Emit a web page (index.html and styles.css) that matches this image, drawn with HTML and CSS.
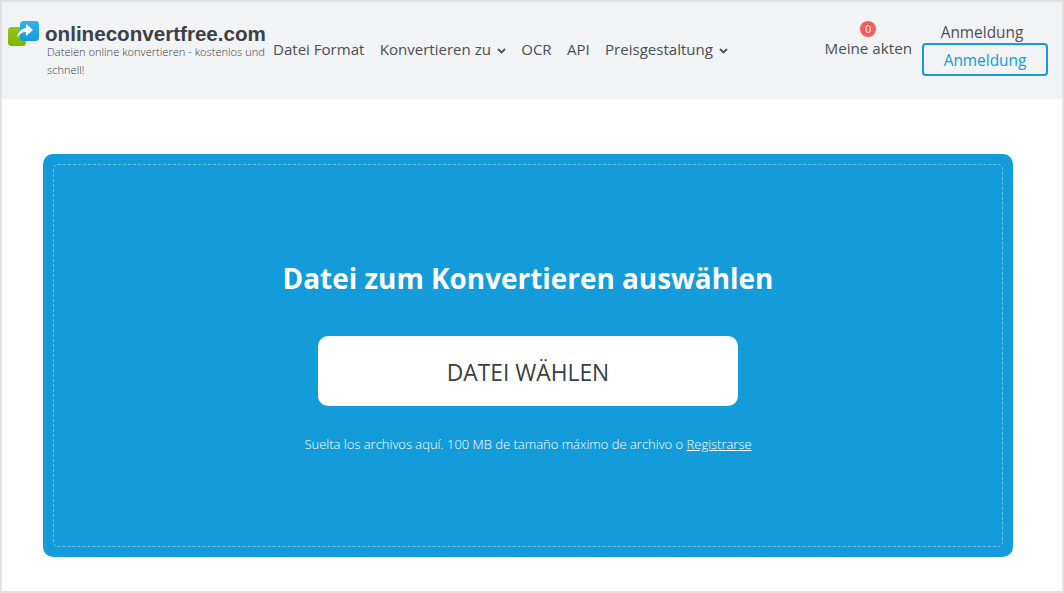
FILE: index.html
```html
<!DOCTYPE html>
<html lang="de">
<head>
    <meta charset="UTF-8">
    <meta name="viewport" content="width=device-width, initial-scale=1.0">
    <title>onlineconvertfree.com</title>
    <link rel="stylesheet" href="styles.css">
</head>
<body>
    <div class="frame">
        <header class="topBar">
            <div class="brand">
                <div class="brandRow">
                    <svg class="logo" width="31" height="25" viewBox="0 0 31 25">
                        <defs>
                            <linearGradient id="greenFill" x1="0" y1="0" x2="0" y2="1">
                                <stop offset="0" stop-color="#93c522"/>
                                <stop offset="1" stop-color="#7cb800"/>
                            </linearGradient>
                            <linearGradient id="blueFill" x1="0" y1="0" x2="0" y2="1">
                                <stop offset="0" stop-color="#35b1ea"/>
                                <stop offset="1" stop-color="#129bda"/>
                            </linearGradient>
                        </defs>
                        <rect x="0" y="6" width="18" height="19" rx="3.500" fill="url(#greenFill)"/>
                        <rect x="12" y="0" width="19" height="20" rx="3.500" fill="url(#blueFill)"/>
                        <path d="M9 16.500 C10 11 13.500 7.500 18 7 V3 L25 9 L18 15 V11 C14.500 11 11.500 13 9 16.500 Z" fill="#fff"/>
                    </svg>
                    <span class="brandName">onlineconvertfree.com</span>
                </div>
                <p class="tagline">Dateien online konvertieren - kostenlos und schnell!</p>
            </div>

            <nav class="mainNav">
                <a href="#">Datei Format</a>
                <a href="#">Konvertieren zu <svg class="chevron" width="9" height="6" viewBox="0 0 9 6"><path d="M1 1 L4.500 4.500 L8 1" fill="none" stroke="#4a4f55" stroke-width="1.800"/></svg></a>
                <a href="#">OCR</a>
                <a href="#">API</a>
                <a href="#">Preisgestaltung <svg class="chevron" width="9" height="6" viewBox="0 0 9 6"><path d="M1 1 L4.500 4.500 L8 1" fill="none" stroke="#4a4f55" stroke-width="1.800"/></svg></a>
            </nav>

            <div class="account">
                <a class="files" href="#">
                    <span class="badge">0</span>
                    <span>Meine akten</span>
                </a>
                <div class="login">
                    <span class="loginLabel">Anmeldung</span>
                    <a class="loginBtn" href="#">Anmeldung</a>
                </div>
            </div>
        </header>

        <main class="content">
            <section class="dropZone">
                <div class="dropInner">
                    <h1>Datei zum Konvertieren auswählen</h1>
                    <a class="chooseBtn" href="#">DATEI WÄHLEN</a>
                    <p class="hint">Suelta los archivos aquí. 100 MB de tamaño máximo de archivo o <a href="#">Registrarse</a></p>
                </div>
            </section>
        </main>
    </div>
</body>
</html>
```

FILE: styles.css
```css
*{
    box-sizing: border-box;
}
html, body{
    margin: 0;
    height: 100%;
}
body{
    font-family: "Open Sans", "Noto Sans", sans-serif;
    color: #4a4f55;
    background: #fff;
    overflow: hidden;
}
a{
    color: inherit;
    text-decoration: none;
}
.frame{
    height: 593px;
    border: 2px solid #e2e2e2;
    background: #fff;
}
.topBar{
    height: 97px;
    background: #f1f3f5;
    display: flex;
    padding-left: 6px;
}
.brand{
    width: 265px;
    padding-top: 19px;
}
.brandRow{
    display: flex;
    align-items: center;
    gap: 6px;
}
.logo{
    flex: none;
}
.brandName{
    font-family: "Liberation Sans", Arial, sans-serif;
    font-weight: 700;
    font-size: 20.600px;
    color: #3c4148;
}
.tagline{
    margin: -3px 0 0;
    padding: 0 0 0 39px;
    width: 265px;
    font-size: 11.100px;
    font-weight: 300;
    line-height: 18px;
    color: #3c4148;
}
.mainNav{
    display: flex;
    gap: 15.300px;
    padding-top: 37px;
    font-size: 15.050px;
    line-height: 20px;
}
.chevron{
    margin-left: 2px;
    vertical-align: 1px;
}
.account{
    margin-left: auto;
    display: flex;
    gap: 10px;
    padding-right: 14px;
}
.files{
    display: flex;
    flex-direction: column;
    align-items: center;
    padding-top: 19px;
    font-size: 15.200px;
    line-height: 20px;
}
.badge{
    width: 16px;
    height: 16px;
    border-radius: 50%;
    background: #fb5a5a;
    color: #fff;
    font-size: 11px;
    line-height: 16px;
    text-align: center;
    margin-bottom: 1px;
}
.login{
    display: flex;
    flex-direction: column;
    align-items: center;
    padding-top: 21px;
    font-size: 15.400px;
}
.loginLabel{
    line-height: 20px;
    padding-right: 6px;
}
.loginBtn{
    width: 126px;
    height: 33px;
    border: 2px solid #129bd9;
    border-radius: 4px;
    color: #129bd9;
    text-align: center;
    line-height: 32px;
}
.content{
    padding: 55px 49px 0 41px;
}
.dropZone{
    height: 403px;
    padding: 10px;
    border-radius: 10px;
    background: #139cd9;
}
.dropInner{
    height: 100%;
    border: 1px dashed rgba(255, 255, 255, 0.4);
    border-radius: 5px;
    display: flex;
    flex-direction: column;
    align-items: center;
    color: #fff;
    padding-top: 94px;
}
.dropInner h1{
    margin: 0;
    font-size: 27.900px;
    line-height: 38px;
    font-weight: 700;
}
.chooseBtn{
    width: 420px;
    height: 70px;
    margin-top: 39px;
    background: #fff;
    border-radius: 10px;
    color: #3a3f45;
    font-size: 22.800px;
    line-height: 74px;
    text-align: center;
}
.hint{
    margin: 29px 0 0;
    font-size: 12.980px;
    font-weight: 300;
    line-height: 18px;
}
.hint a{
    text-decoration: underline;
}
```
